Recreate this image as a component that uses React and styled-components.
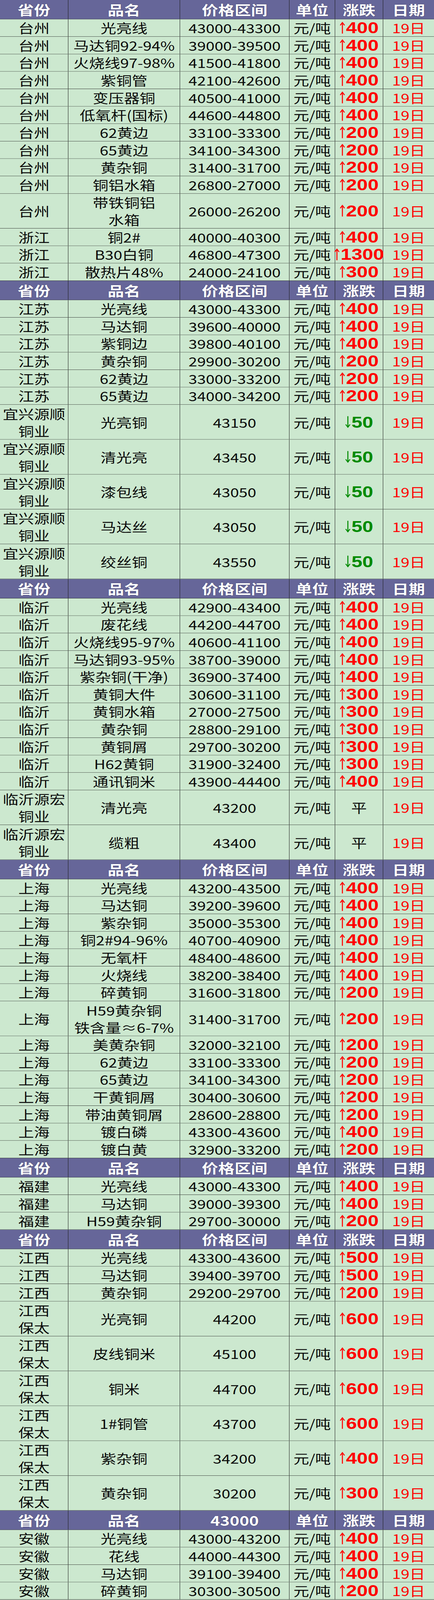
import React from 'react'
import styled, { createGlobalStyle } from 'styled-components'

const GlobalStyle = createGlobalStyle`
  html, body {
    margin: 0;
    padding: 0;
    background: #cce8cf;
  }
  body {
    font-family: "Noto Sans CJK SC", "Noto Sans", sans-serif;
  }
`

const SHEET_HEIGHT = 5048
const COLS = '175px 286px 280px 117px 123px 130px'

// the window can be shorter than the sheet, so the frame squeezes it to fit
const Frame = styled.div`
  width: 1111px;
  overflow: hidden;
`

const Sheet = styled.div`
  width: 1111px;
  height: ${SHEET_HEIGHT}px;
  background: #cce8cf;
  transform-origin: 0 0;
`

const Row = styled.div`
  display: grid;
  grid-template-columns: ${COLS};
  grid-template-rows: minmax(0, 1fr);
  height: ${p => (p.$tall ? 110 : 55)}px;
  box-sizing: border-box;
  background: #cce8cf;
  border-bottom: 1px solid #1c1c1c;
`

const HeadRow = styled(Row)`
  height: 61px;
  background: #666699;
`

const Cell = styled.div`
  display: flex;
  align-items: center;
  justify-content: center;
  text-align: center;
  box-sizing: border-box;
  border-right: 1px solid #1c1c1c;
  font-size: 40px;
  line-height: 54px;
  color: #0a0a0a;
  white-space: pre-line;
  &:last-child { border-right: none; }
`

const HeadCell = styled(Cell)`
  color: #fff;
  font-weight: 700;
  font-size: 42px;
  line-height: 58px;
  text-shadow: 0 0 2px rgba(30, 30, 60, 0.8);
`

const DateText = styled.span`
  color: #ff0000;
`

const Change = styled.span`
  display: inline-flex;
  align-items: center;
  color: ${p => p.$color};
  font-family: "Liberation Sans Narrow", "Liberation Sans", sans-serif;
  font-size: 50px;
  line-height: 54px;
  font-weight: 700;
  white-space: nowrap;
  svg {
    flex: none;
    margin-right: 2px;
    margin-top: -1px;
  }
`

const Flat = styled.span`
  color: #0a0a0a;
  font-size: 40px;
`

const sections = [
  {
    price: '价格区间',
    rows: [
      ['台州', '光亮线', '43000-43300', '+400'],
      ['台州', '马达铜92-94%', '39000-39500', '+400'],
      ['台州', '火烧线97-98%', '41500-41800', '+400'],
      ['台州', '紫铜管', '42100-42600', '+400'],
      ['台州', '变压器铜', '40500-41000', '+400'],
      ['台州', '低氧杆(国标)', '44600-44800', '+400'],
      ['台州', '62黄边', '33100-33300', '+200'],
      ['台州', '65黄边', '34100-34300', '+200'],
      ['台州', '黄杂铜', '31400-31700', '+200'],
      ['台州', '铜铝水箱', '26800-27000', '+200'],
      ['台州', '带铁铜铝\n水箱', '26000-26200', '+200'],
      ['浙江', '铜2#', '40000-40300', '+400'],
      ['浙江', 'B30白铜', '46800-47300', '+1300'],
      ['浙江', '散热片48%', '24000-24100', '+300'],
    ],
  },
  {
    price: '价格区间',
    rows: [
      ['江苏', '光亮线', '43000-43300', '+400'],
      ['江苏', '马达铜', '39600-40000', '+400'],
      ['江苏', '紫铜边', '39800-40100', '+400'],
      ['江苏', '黄杂铜', '29900-30200', '+200'],
      ['江苏', '62黄边', '33000-33200', '+200'],
      ['江苏', '65黄边', '34000-34200', '+200'],
      ['宜兴源顺\n铜业', '光亮铜', '43150', '-50'],
      ['宜兴源顺\n铜业', '清光亮', '43450', '-50'],
      ['宜兴源顺\n铜业', '漆包线', '43050', '-50'],
      ['宜兴源顺\n铜业', '马达丝', '43050', '-50'],
      ['宜兴源顺\n铜业', '绞丝铜', '43550', '-50'],
    ],
  },
  {
    price: '价格区间',
    rows: [
      ['临沂', '光亮线', '42900-43400', '+400'],
      ['临沂', '废花线', '44200-44700', '+400'],
      ['临沂', '火烧线95-97%', '40600-41100', '+400'],
      ['临沂', '马达铜93-95%', '38700-39000', '+400'],
      ['临沂', '紫杂铜(干净)', '36900-37400', '+400'],
      ['临沂', '黄铜大件', '30600-31100', '+300'],
      ['临沂', '黄铜水箱', '27000-27500', '+300'],
      ['临沂', '黄杂铜', '28800-29100', '+300'],
      ['临沂', '黄铜屑', '29700-30200', '+300'],
      ['临沂', 'H62黄铜', '31900-32400', '+300'],
      ['临沂', '通讯铜米', '43900-44400', '+400'],
      ['临沂源宏\n铜业', '清光亮', '43200', '平'],
      ['临沂源宏\n铜业', '缆粗', '43400', '平'],
    ],
  },
  {
    price: '价格区间',
    rows: [
      ['上海', '光亮线', '43200-43500', '+400'],
      ['上海', '马达铜', '39200-39600', '+400'],
      ['上海', '紫杂铜', '35000-35300', '+400'],
      ['上海', '铜2#94-96%', '40700-40900', '+400'],
      ['上海', '无氧杆', '48400-48600', '+400'],
      ['上海', '火烧线', '38200-38400', '+400'],
      ['上海', '碎黄铜', '31600-31800', '+200'],
      ['上海', 'H59黄杂铜\n铁含量≈6-7%', '31400-31700', '+200'],
      ['上海', '美黄杂铜', '32000-32100', '+200'],
      ['上海', '62黄边', '33100-33300', '+200'],
      ['上海', '65黄边', '34100-34300', '+200'],
      ['上海', '干黄铜屑', '30400-30600', '+200'],
      ['上海', '带油黄铜屑', '28600-28800', '+200'],
      ['上海', '镀白磷', '43300-43600', '+400'],
      ['上海', '镀白黄', '32900-33200', '+200'],
    ],
  },
  {
    price: '价格区间',
    rows: [
      ['福建', '光亮线', '43000-43300', '+400'],
      ['福建', '马达铜', '39000-39300', '+400'],
      ['福建', 'H59黄杂铜', '29700-30000', '+200'],
    ],
  },
  {
    price: '价格区间',
    rows: [
      ['江西', '光亮线', '43300-43600', '+500'],
      ['江西', '马达铜', '39400-39700', '+500'],
      ['江西', '黄杂铜', '29200-29700', '+200'],
      ['江西\n保太', '光亮铜', '44200', '+600'],
      ['江西\n保太', '皮线铜米', '45100', '+600'],
      ['江西\n保太', '铜米', '44700', '+600'],
      ['江西\n保太', '1#铜管', '43700', '+600'],
      ['江西\n保太', '紫杂铜', '34200', '+400'],
      ['江西\n保太', '黄杂铜', '30200', '+300'],
    ],
  },
  {
    price: '43000',
    rows: [
      ['安徽', '光亮线', '43000-43200', '+400'],
      ['安徽', '花线', '44000-44300', '+400'],
      ['安徽', '马达铜', '39100-39400', '+400'],
      ['安徽', '碎黄铜', '30300-30500', '+200'],
    ],
  },
]

// thin arrow like the one in the spreadsheet font
function ArrowIcon({ up }) {
  return (
    <svg width="15" height="38" viewBox="0 0 15 38" fill="none" stroke="currentColor" strokeWidth="2.6">
      {up ? (
        <path d="M7.5 37V3M2 11L7.5 2L13 11" />
      ) : (
        <path d="M7.5 1V35M2 27L7.5 36L13 27" />
      )}
    </svg>
  )
}

function ChangeValue({ value }) {
  if (value === '平') return <Flat>平</Flat>
  const up = value[0] === '+'
  return (
    <Change $color={up ? '#ff0000' : '#008a00'}>
      <ArrowIcon up={up} />
      {value.slice(1)}
    </Change>
  )
}

function Section({ price, rows }) {
  return (
    <>
      <HeadRow>
        <HeadCell>省份</HeadCell>
        <HeadCell>品名</HeadCell>
        <HeadCell>{price}</HeadCell>
        <HeadCell>单位</HeadCell>
        <HeadCell>涨跌</HeadCell>
        <HeadCell>日期</HeadCell>
      </HeadRow>
      {rows.map(([prov, name, range, change], i) => (
        <Row key={i} $tall={prov.includes('\n') || name.includes('\n')}>
          <Cell>{prov}</Cell>
          <Cell>{name}</Cell>
          <Cell>{range}</Cell>
          <Cell>元/吨</Cell>
          <Cell><ChangeValue value={change} /></Cell>
          <Cell><DateText>19日</DateText></Cell>
        </Row>
      ))}
    </>
  )
}

export default function App() {
  // browsers cap the window height; squeeze the sheet vertically when it doesn't fit
  const fit = Math.min(1, window.innerHeight / SHEET_HEIGHT)
  return (
    <Frame style={{ height: SHEET_HEIGHT * fit }}>
      <GlobalStyle />
      <Sheet style={{ transform: `scaleY(${fit})` }}>
        {sections.map((s, i) => (
          <Section key={i} price={s.price} rows={s.rows} />
        ))}
      </Sheet>
    </Frame>
  )
}
